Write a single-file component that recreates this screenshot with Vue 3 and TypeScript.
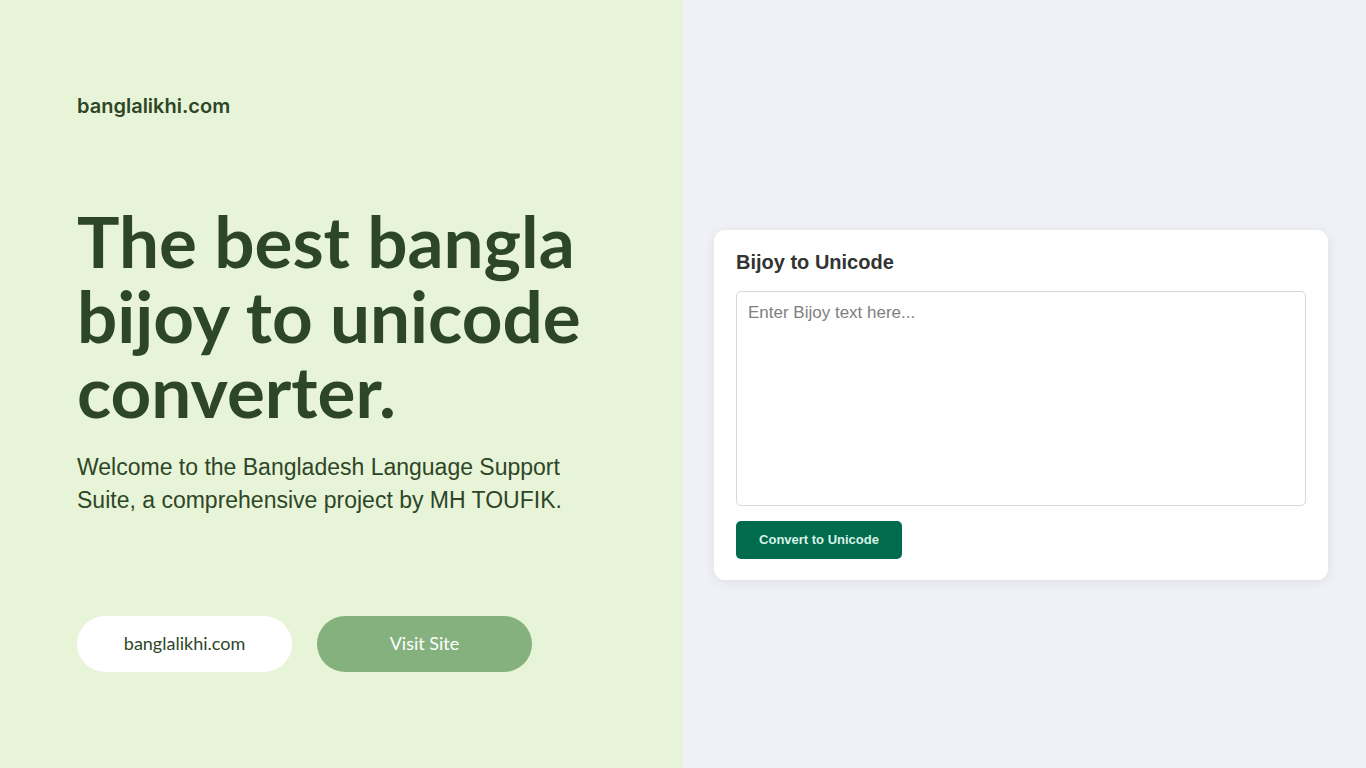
<script setup lang="ts">
import { ref } from 'vue'

const source = ref('')
</script>

<template>
  <main class="page">
    <section class="intro">
      <p class="brand">banglalikhi.com</p>
      <h1>The best bangla<br />bijoy to unicode<br />converter.</h1>
      <p class="lead">Welcome to the Bangladesh Language Support<br />Suite, a comprehensive project by MH TOUFIK.</p>
      <nav class="actions">
        <a class="pill light" href="#site">banglalikhi.com</a>
        <a class="pill green" href="#visit">Visit Site</a>
      </nav>
    </section>
    <section class="demo">
      <form class="card" @submit.prevent>
        <label for="bijoy">Bijoy to Unicode</label>
        <textarea id="bijoy" v-model="source" placeholder="Enter Bijoy text here..."></textarea>
        <button type="submit">Convert to Unicode</button>
      </form>
    </section>
  </main>
</template>

<style>
body {
  margin: 0;
}
</style>

<style scoped>
.page {
  display: grid;
  grid-template-columns: 1fr 1fr;
  min-height: 100vh;
  font-family: "Liberation Sans", Arial, sans-serif;
}
.intro {
  box-sizing: border-box;
  padding: 92px 0 92px 77px;
  background: #e8f4d7;
  color: #2d4628;
  white-space: nowrap;
}
.brand {
  margin: 0;
  font: 600 20px/28px Inter, sans-serif;
}
h1 {
  margin: 83px 0 0;
  font: 700 71px/75px Lato, sans-serif;
}
.lead {
  margin: 23px 0 0;
  font-size: 23px;
  line-height: 33px;
}
.actions {
  display: flex;
  gap: 25px;
  margin-top: 99px;
}
.pill {
  box-sizing: border-box;
  width: 215px;
  height: 56px;
  border-radius: 28px;
  font: 400 18px/54px Lato, sans-serif;
  text-align: center;
  text-decoration: none;
}
.light {
  background: #fff;
  color: #2d4628;
}
.green {
  background: #84b17d;
  color: #fff;
}
.demo {
  display: flex;
  align-items: center;
  box-sizing: border-box;
  padding: 42px 38px 0 31px;
  background: #f0f1f6;
}
.card {
  display: flex;
  flex: 1;
  flex-direction: column;
  align-items: flex-start;
  padding: 20px 22px 21px;
  border-radius: 11px;
  background: #fff;
  box-shadow: 0 2px 12px rgba(0, 0, 0, 0.08);
}
label {
  color: #333;
  font-size: 20px;
  font-weight: 700;
  line-height: 24px;
}
textarea {
  box-sizing: border-box;
  width: 100%;
  height: 215px;
  margin: 17px 0 15px;
  padding: 11px;
  border: 1px solid #d9d9d9;
  border-radius: 5px;
  color: #333;
  font: 17px/20px "Liberation Sans", Arial, sans-serif;
  resize: none;
}
textarea::placeholder {
  color: #808080;
}
button {
  width: 166px;
  height: 38px;
  padding: 0;
  border: 0;
  border-radius: 5px;
  background: #006b4d;
  color: #d9f2e6;
  font: 700 13px/38px "Liberation Sans", Arial, sans-serif;
}
</style>
